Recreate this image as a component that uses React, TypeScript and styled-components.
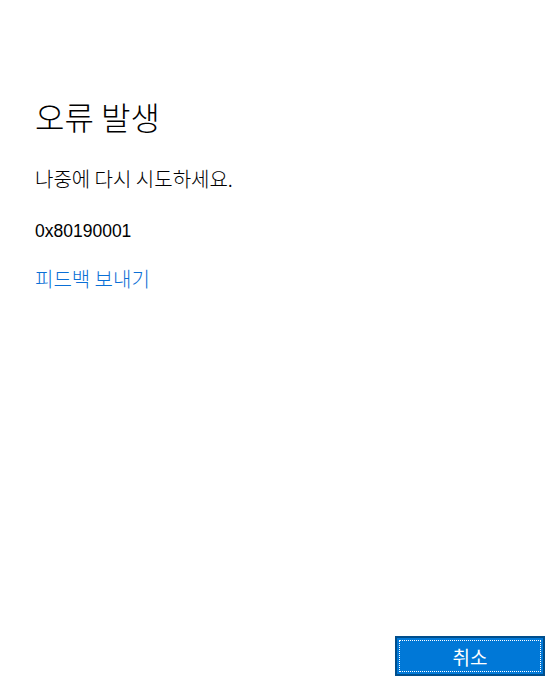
import styled, { createGlobalStyle } from "styled-components";

const GlobalStyle = createGlobalStyle`
  html, body {
    margin: 0;
    padding: 0;
    background: #ffffff;
  }
  body {
    font-family: "Noto Sans CJK KR", "Noto Sans", sans-serif;
  }
`;

const Page = styled.div`
  display: flex;
  flex-direction: column;
  width: 554px;
  height: 688px;
  box-sizing: border-box;
  padding: 0 9px 12px 35px;
`;

const Content = styled.div`
  flex: 1;
  display: flex;
  flex-direction: column;
  padding-top: 94px;
`;

const Title = styled.h1`
  margin: 0;
  font-size: 32px;
  font-weight: 300;
  line-height: 44px;
  color: #000;
`;

const Message = styled.p`
  margin: 28px 0 0;
  font-size: 20px;
  font-weight: 300;
  line-height: 26px;
  color: #000;
`;

const Code = styled.p`
  margin: 26px 0 0;
  font-family: "Liberation Sans", "Noto Sans CJK KR", sans-serif;
  font-size: 17.5px;
  line-height: 26px;
  color: #000;
`;

const FeedbackLink = styled.a`
  margin-top: 22px;
  font-size: 20px;
  font-weight: 300;
  line-height: 26px;
  color: #0a6fd6;
  text-decoration: none;
  cursor: pointer;
`;

const Footer = styled.div`
  display: flex;
  justify-content: flex-end;
`;

const CancelButton = styled.button`
  width: 150px;
  height: 40px;
  box-sizing: border-box;
  border: 2px solid #004e8c;
  background: #0078d7;
  color: #fff;
  font-family: "Noto Sans CJK KR", sans-serif;
  font-size: 19px;
  padding: 0;
  outline: 1px dotted #fff;
  outline-offset: -5px;
`;

export default function App() {
  return (
    <>
      <GlobalStyle />
      <Page>
        <Content>
          <Title>오류 발생</Title>
          <Message>나중에 다시 시도하세요.</Message>
          <Code>0x80190001</Code>
          <FeedbackLink>피드백 보내기</FeedbackLink>
        </Content>
        <Footer>
          <CancelButton>취소</CancelButton>
        </Footer>
      </Page>
    </>
  );
}
